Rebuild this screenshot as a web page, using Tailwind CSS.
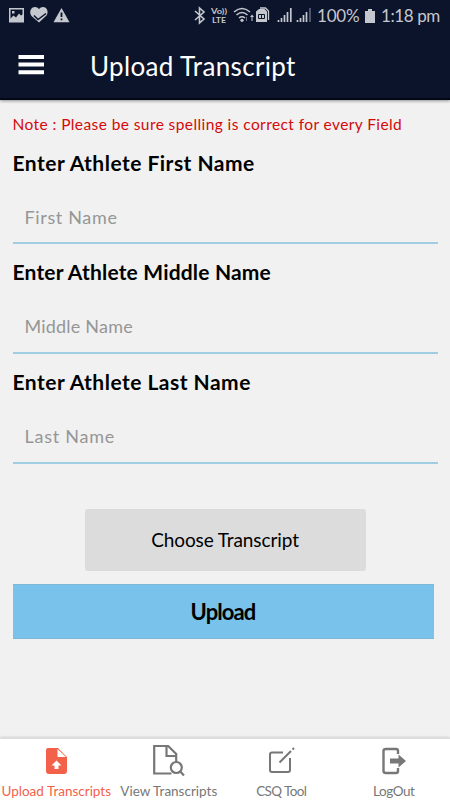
<!DOCTYPE html>
<html lang="en">
<head>
<meta charset="utf-8">
<meta name="viewport" content="width=device-width, initial-scale=1">
<title>Upload Transcript</title>
<script src="https://cdn.jsdelivr.net/npm/@tailwindcss/browser@4"></script>
</head>
<body class="w-[450px] h-[800px] overflow-hidden bg-[#f1f1f1] font-[Lato,sans-serif] text-black">
<div class="flex h-full flex-col whitespace-nowrap">
  <header class="h-[100px] shrink-0 border-b-2 border-[#030817] bg-[#0b142b] shadow-[0_1px_3px_#0006]">
    <div class="flex h-[32px] items-center justify-between pl-[8px] pr-[10px] text-[#c5c7ce]">
      <svg class="h-[32px] w-[64px]" viewBox="8 0 64 32" fill="currentColor">
        <path fill-rule="evenodd" d="M9 8h15v14.500H9zM10.500 9.500v9l3-3 2.500 2 3-4 2 2 1.500-1V9.500zM12 11h2.500v2.500H12z"/>
        <path d="M39 22.500L31.500 16C28.500 12 31 7 35 7q2.500 0 4 2 1.500-2 4-2c4 0 6 5 3.500 8.500z"/>
        <path d="M34 15.500l4 4 8-6" fill="none" stroke="#0b142b" stroke-width="1.500"/>
        <path d="M61.500 8l8 14.300h-16z"/><path d="M61.500 12.500v4.500M61.500 18.500v1.800" stroke="#0b142b" stroke-width="1.800"/>
      </svg>
      <div class="flex h-[32px] items-center">
        <svg class="h-[32px] w-[120px]" viewBox="192 0 120 32" fill="currentColor">
          <path d="M194 11l9 8-4.500 4V8l4.500 4-9 8" fill="none" stroke="currentColor" stroke-width="1.600"/>
          <text x="210" y="13.500" font-size="7" font-weight="700" textLength="16" lengthAdjust="spacingAndGlyphs">Vo))</text>
          <text x="211" y="22.500" font-size="7.500" font-weight="700" textLength="14" lengthAdjust="spacingAndGlyphs">LTE</text>
          <g fill="none" stroke="currentColor" stroke-width="1.600"><path d="M233 12q8-7 16 0M235.500 15q5.500-5 11 0M238 18q3-2.500 6 0"/></g>
          <circle cx="241" cy="20.300" r="1.600"/>
          <path d="M250.500 21v-4h-1.500l2-2.500 2 2.500h-1.500v4z"/><path d="M245.500 17v4" stroke="#69708a"/>
          <path d="M255 11.500l3-2.500h5.500l2.500 2.500V22h-11z"/><path d="M259 8h5.500l3 3v9" fill="none" stroke="currentColor" stroke-width="1.300"/>
          <path d="M257.500 14.500h6v4h-6zM260.500 14.500v4" fill="none" stroke="#0b142b"/>
          <g stroke="currentColor" stroke-width="1.700"><path d="M277.500 22v-2M280.500 22v-4M283.500 22v-7M286.500 22V12M289.800 22V8M296.500 22v-2M299.500 22v-4M302.500 22v-7"/><path d="M305.500 22V12"/><path d="M309 22V8" stroke="#59617a"/></g>
        </svg>
        <span class="ml-[4px] w-[43px] text-[17px] tracking-[-.2px]">100%</span>
        <svg class="ml-[4px] h-[16px] w-[12px]" viewBox="0 0 12 16" fill="currentColor"><path d="M4 1h4v2h3v12H1V3h3z"/></svg>
        <span class="ml-[5px] w-[59px] text-[17px] tracking-[-.4px]">1:18 pm</span>
      </div>
    </div>
    <div class="flex h-[66px] items-center pl-[18px]">
      <svg class="h-[22px] w-[26px]" viewBox="0 0 26 22" stroke="#fff" stroke-width="4"><path d="M.5 3h25.500M.5 10.500h25.500M.5 18.200h25.500"/></svg>
      <h1 class="ml-[46px] pt-px text-[26px] leading-[32px] tracking-[.35px] text-white">Upload Transcript</h1>
    </div>
  </header>
  <main class="flex flex-1 flex-col px-[12.500px] pt-[14px]">
    <p class="h-[20px] text-[15.500px] leading-[20px] tracking-[.41px] text-[#d40a0a]">Note : Please be sure spelling is correct for every Field</p>
    <label class="mt-[15px] h-[28px] text-[21px] font-bold leading-[28px] tracking-[.48px]">Enter Athlete First Name</label>
    <div class="mt-[15px] h-[52px] border-b-2 border-[#9fcde2] pl-[12px] pt-[12px] text-[18px] leading-[26px] tracking-[.65px] text-[#969696]">First Name</div>
    <label class="mt-[14px] h-[28px] text-[21px] font-bold leading-[28px] tracking-[.18px]">Enter Athlete Middle Name</label>
    <div class="mt-[15px] h-[53px] border-b-2 border-[#9fcde2] pl-[12px] pt-[12px] text-[18px] leading-[26px] tracking-[.2px] text-[#969696]">Middle Name</div>
    <label class="mt-[14px] h-[28px] text-[21px] font-bold leading-[28px] tracking-[.48px]">Enter Athlete Last Name</label>
    <div class="mt-[15px] h-[53px] border-b-2 border-[#9fcde2] pl-[12px] pt-[12px] text-[18px] leading-[26px] tracking-[.75px] text-[#969696]">Last Name</div>
    <button class="ml-[72px] mt-[45px] h-[62px] w-[281px] rounded-[3px] bg-[#dcdcdc] pt-px text-[19px] tracking-[-.1px]">Choose Transcript</button>
    <button class="mt-[13px] h-[55px] w-[421px] border-y border-[#80b7d4] bg-[#79c2eb] text-[22px] font-bold tracking-[-.9px]">Upload</button>
  </main>
  <nav class="grid h-[62px] shrink-0 grid-cols-4 border-t border-[#dedede] bg-white text-center text-[13.500px] leading-[18px] text-[#777] shadow-[0_-1px_2px_#0002]">
    <div class="flex flex-col items-center text-[#f4614a]">
      <svg class="h-[43px] w-[40px]" viewBox="0 0 40 43"><path fill="currentColor" fill-rule="evenodd" d="M12 9h10l9 9v14q0 3-3 3H13q-3 0-3-3V11q0-2 2-2zM21.500 10v8H30z"/><path fill="#fff" d="M20.500 21.500l5 5h-3V30h-4v-3.500h-3z"/></svg>
      <span>Upload Transcripts</span>
    </div>
    <div class="flex flex-col items-center">
      <svg class="h-[43px] w-[40px]" viewBox="149 739 40 43" fill="none" stroke="currentColor" stroke-width="2.200"><path d="M171.500 773.500h-17.300v-27.500h14l8 8v8M166.500 746v10h10"/><circle cx="176.300" cy="767.500" r="5.500"/><path d="M180 771.300l4 4.200"/></svg>
      <span>View Transcripts</span>
    </div>
    <div class="flex flex-col items-center">
      <svg class="h-[43px] w-[40px]" viewBox="261 739 40 43" fill="none" stroke="currentColor" stroke-width="2"><path d="M283 752.500h-11q-2 0-2 2v15.500q0 2 2 2h16q2 0 2-2v-12M279.500 762.500L291 751M292.500 749.500l1.500-1.500"/></svg>
      <span class="tracking-[-.6px]">CSQ Tool</span>
    </div>
    <div class="flex flex-col items-center">
      <svg class="h-[43px] w-[40px]" viewBox="374 739 40 43" fill="none" stroke="currentColor" stroke-width="2.400"><path d="M398 754v-3q0-2-2-2h-10q-2.500 0-2.500 2v20q0 2 2.500 2h10q2 0 2-2v-3"/><path fill="currentColor" stroke="none" d="M390 758.500h8.500v-4l7.500 6.500-7.500 6.500v-4H390z"/></svg>
      <span class="tracking-[-.4px]">LogOut</span>
    </div>
  </nav>
</div>
</body>
</html>
